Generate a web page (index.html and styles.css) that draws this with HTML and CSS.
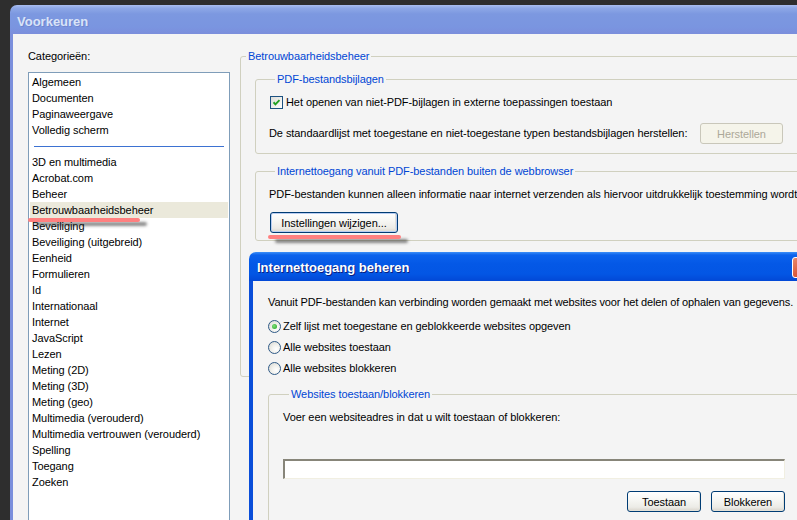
FILE: index.html
```html
<!DOCTYPE html>
<html lang="nl">
<head>
<meta charset="utf-8">
<title>Voorkeuren</title>
<link rel="stylesheet" href="styles.css">
</head>
<body>
<div class="window">
  <div class="titlebar"><span>Voorkeuren</span></div>
  <div class="frame">
    <div class="content">
      <div class="left">
        <div class="cat-label">Categorieën:</div>
        <ul class="list">
          <li>Algemeen</li>
          <li>Documenten</li>
          <li>Paginaweergave</li>
          <li>Volledig scherm</li>
          <li class="sep"></li>
          <li>3D en multimedia</li>
          <li>Acrobat.com</li>
          <li>Beheer</li>
          <li class="sel">Betrouwbaarheidsbeheer</li>
          <li>Beveiliging</li>
          <li>Beveiliging (uitgebreid)</li>
          <li>Eenheid</li>
          <li>Formulieren</li>
          <li>Id</li>
          <li>Internationaal</li>
          <li>Internet</li>
          <li>JavaScript</li>
          <li>Lezen</li>
          <li>Meting (2D)</li>
          <li>Meting (3D)</li>
          <li>Meting (geo)</li>
          <li>Multimedia (verouderd)</li>
          <li>Multimedia vertrouwen (verouderd)</li>
          <li>Spelling</li>
          <li>Toegang</li>
          <li>Zoeken</li>
        </ul>
      </div>
      <div class="right">
        <fieldset class="group outer">
          <legend>Betrouwbaarheidsbeheer</legend>
          <fieldset class="group sub sub1">
            <legend>PDF-bestandsbijlagen</legend>
            <div class="check-row">
              <span class="checkbox"><svg width="13" height="13" viewBox="0 0 13 13"><path d="M3 6.2 L5.2 8.6 L10 3.6" fill="none" stroke="#21a121" stroke-width="2.2"/></svg></span>
              <span>Het openen van niet-PDF-bijlagen in externe toepassingen toestaan</span>
            </div>
            <div class="reset-row">
              <span>De standaardlijst met toegestane en niet-toegestane typen bestandsbijlagen herstellen:</span>
              <button class="btn disabled btn-herstellen">Herstellen</button>
            </div>
          </fieldset>
          <fieldset class="group sub sub2">
            <legend>Internettoegang vanuit PDF-bestanden buiten de webbrowser</legend>
            <div class="info">PDF-bestanden kunnen alleen informatie naar internet verzenden als hiervoor uitdrukkelijk toestemming wordt</div>
            <button class="btn btn-instellingen">Instellingen wijzigen...</button>
          </fieldset>
        </fieldset>
      </div>
    </div>
  </div>
</div>

<div class="mark mark1"></div>
<div class="mark mark2"></div>

<div class="dialog">
  <div class="dlg-title"><span>Internettoegang beheren</span><span class="close"></span></div>
  <div class="dlg-body">
    <div class="dlg-text">Vanuit PDF-bestanden kan verbinding worden gemaakt met websites voor het delen of ophalen van gegevens.</div>
    <div class="radios">
      <div class="radio-row"><span class="radio on"></span><span>Zelf lijst met toegestane en geblokkeerde websites opgeven</span></div>
      <div class="radio-row"><span class="radio"></span><span>Alle websites toestaan</span></div>
      <div class="radio-row"><span class="radio"></span><span>Alle websites blokkeren</span></div>
    </div>
    <fieldset class="group sites">
      <legend>Websites toestaan/blokkeren</legend>
      <div class="sites-text">Voer een websiteadres in dat u wilt toestaan of blokkeren:</div>
      <div class="input"></div>
      <div class="btn-row">
        <button class="btn btn-small">Toestaan</button>
        <button class="btn btn-small">Blokkeren</button>
      </div>
    </fieldset>
  </div>
</div>
</body>
</html>
```
FILE: styles.css
```css
* { box-sizing: border-box; }

html, body {
  margin: 0;
  padding: 0;
}

body {
  width: 797px;
  height: 520px;
  overflow: hidden;
  position: relative;
  background: #2e2e2e;
  font-family: "Liberation Sans", Arial, sans-serif;
  font-size: 11px;
  line-height: 13px;
  letter-spacing: -0.07px;
  color: #000;
}

.window {
  margin: 5px 0 0 10px;
  width: 800px;
}

.titlebar {
  height: 29px;
  border-radius: 7px 7px 0 0;
  background: linear-gradient(#aabef0 0, #8ea8e7 3px, #7c98e0 9px, #7a95e0 22px, #7b8edc 29px);
  padding: 3px 0 0 7px;
  display: flex;
  align-items: center;
  font-weight: bold;
  font-size: 13px;
  letter-spacing: 0;
  color: #d9e3f8;
  text-shadow: 1px 1px 0 #6f85cf;
}

.frame {
  border-left: 3px solid #7b8fdc;
  background: #f4f4f4;
  height: 490px;
}

.content {
  display: grid;
  grid-template-columns: 202px 1fr;
  column-gap: 10px;
  padding: 16px 0 0 15px;
}

.cat-label {
  height: 13px;
  margin-bottom: 9px;
}

.list {
  list-style: none;
  margin: 0;
  padding: 1px 1px 0;
  border: 1px solid #7f9db9;
  background: #fff;
  height: 470px;
}

.list li {
  height: 16px;
  line-height: 16px;
  padding-left: 2px;
  white-space: nowrap;
}

.list li.sel {
  background: #ebe9db;
}

.list li.sep {
  position: relative;
}

.list li.sep::after {
  content: "";
  position: absolute;
  left: 4px;
  right: 4px;
  top: 8px;
  height: 1px;
  background: #3d72d2;
}

/* group boxes */
.group {
  margin: 0;
  padding: 0;
  border: 1px solid #d0d0bf;
  border-radius: 3px;
  min-width: 0;
}

.group > legend {
  padding: 0 2px;
  color: #0046d5;
  line-height: 13px;
  white-space: nowrap;
}

.outer {
  padding-bottom: 135px;
}

.outer > legend {
  margin-left: 5px;
}

.sub {
  margin: 10px 0 0 14px;
  padding: 0 0 9px 13px;
}

.sub > legend {
  margin-left: 6px;
}

.sub2 {
  margin-top: 11px;
  padding-bottom: 7px;
}

.check-row {
  display: flex;
  align-items: center;
  height: 13px;
  margin-top: 10px;
  white-space: nowrap;
}

.checkbox {
  width: 13px;
  height: 13px;
  margin-left: 1px;
  margin-right: 3px;
  border: 1px solid #1c5180;
  background: linear-gradient(135deg, #dcdcd7, #ffffff);
  display: flex;
  align-items: center;
  justify-content: center;
}

.checkbox svg {
  width: 11px;
  height: 11px;
}

.reset-row {
  margin-top: 14px;
  width: 514px;
  display: flex;
  justify-content: space-between;
  align-items: center;
  white-space: nowrap;
}

.info {
  margin-top: 10px;
  white-space: nowrap;
}

/* buttons */
.btn {
  font-family: "Liberation Sans", Arial, sans-serif;
  font-size: 11px;
  letter-spacing: -0.07px;
  color: #000;
  height: 21px;
  padding: 0;
  border: 1px solid #003c74;
  border-radius: 3px;
  background: linear-gradient(#ffffff 0, #f7f7f4 40%, #ecebe6 80%, #d8d4cb 100%);
  box-shadow: inset -1px -1px 0 #e3e1d8;
  white-space: nowrap;
}

.btn.disabled {
  border-color: #c9c7ba;
  background: #f5f4ea;
  box-shadow: none;
  color: #aca899;
}

.btn-herstellen {
  width: 83px;
}

.btn-instellingen {
  display: block;
  margin: 11px 0 0 1px;
  width: 128px;
  box-shadow: inset 0 0 0 1px #b9cdf1, inset -1px -1px 0 1px #e3e1d8;
}

.btn-small {
  width: 74px;
}

/* annotation marks */
.mark {
  position: absolute;
  height: 4px;
  border-radius: 2px;
  background: #ff8080;
  box-shadow: 7px 4px 3px rgba(40, 40, 40, 0.55);
}

.mark1 {
  left: 28px;
  top: 218px;
  width: 112px;
}

.mark2 {
  left: 268px;
  top: 235px;
  width: 133px;
}

/* dialog */
.dialog {
  position: absolute;
  left: 249px;
  top: 252px;
  width: 570px;
  height: 280px;
}

.dlg-title {
  position: relative;
  height: 29px;
  border-radius: 7px 7px 0 0;
  background: linear-gradient(#3c8ff8 0, #0b62ec 3px, #0458e6 12px, #0356e4 22px, #0248d6 29px);
  padding: 2px 0 0 8px;
  display: flex;
  align-items: center;
  font-weight: bold;
  font-size: 13px;
  letter-spacing: 0;
  color: #fff;
  text-shadow: 1px 1px 0 #0a1f80;
}

.close {
  position: absolute;
  left: 543px;
  top: 5px;
  width: 21px;
  height: 21px;
  border: 1px solid #fff;
  border-radius: 3px;
  background: linear-gradient(135deg, #e98a6f, #d65334 60%, #c0401f);
}

.dlg-body {
  border-left: 4px solid #0a4ed9;
  background: #f4f4f4;
  height: 251px;
  padding: 15px 0 0 15px;
}

.dlg-text {
  white-space: nowrap;
  letter-spacing: -0.13px;
}

.radios {
  margin-top: 7px;
}

.radio-row {
  height: 21px;
  display: flex;
  align-items: center;
  white-space: nowrap;
}

.radio {
  width: 13px;
  height: 13px;
  margin-right: 2px;
  border: 1px solid #2f5a87;
  border-radius: 50%;
  background: radial-gradient(circle at 65% 65%, #ffffff 0, #f2f2ee 40%, #d6d5cf 100%);
  display: flex;
  align-items: center;
  justify-content: center;
}

.radio.on::after {
  content: "";
  width: 5px;
  height: 5px;
  border-radius: 50%;
  background: radial-gradient(circle at 40% 40%, #7fe07a, #21a121);
}

.sites {
  margin-top: 9px;
  width: 540px;
  padding: 0 0 20px 14px;
}

.sites > legend {
  margin-left: 6px;
}

.sites-text {
  margin-top: 10px;
  white-space: nowrap;
}

.input {
  margin-top: 35px;
  width: 502px;
  height: 20px;
  background: #fff;
  border-style: solid;
  border-width: 2px 1px 1px 2px;
  border-color: #878579 #f1efe2 #f1efe2 #878579;
}

.btn-row {
  margin-top: 12px;
  width: 502px;
  display: flex;
  justify-content: flex-end;
  gap: 10px;
}
```
